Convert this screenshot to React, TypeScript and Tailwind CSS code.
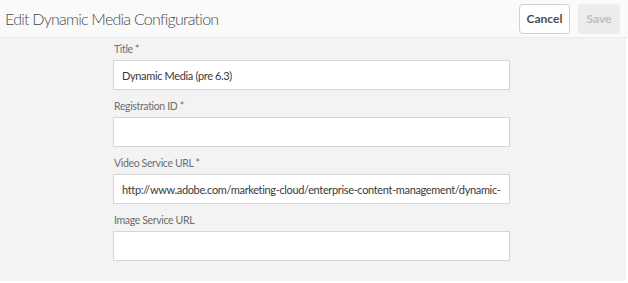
import React from 'react'

const fields = [
  { label: 'Title *', value: 'Dynamic Media (pre 6.3)' },
  { label: 'Registration ID *', value: '' },
  {
    label: 'Video Service URL *',
    value: 'http://www.adobe.com/marketing-cloud/enterprise-content-management/dynamic-media.html',
  },
  { label: 'Image Service URL', value: '' },
]

export default function App() {
  return (
    <div className="w-[628px] h-[283px] bg-white font-['Lato',sans-serif] overflow-hidden">
      {/* header */}
      <div className="h-[38px] bg-[#fafafa] flex items-center justify-between pl-[5px] pr-[8px] border-b border-[#ececec]">
        <h1 className="text-[16px] font-light text-[#4b4b4b] tracking-[-0.75px]">Edit Dynamic Media Configuration</h1>
        <div className="flex items-center gap-[8px]">
          <button className="h-[30px] w-[51px] rounded-[4px] border border-[#d0d0d0] bg-white text-[12px] font-bold text-[#4b4b4b]">
            Cancel
          </button>
          <button className="h-[30px] w-[42px] rounded-[4px] bg-[#ececec] text-[12px] font-bold text-[#bdbdbd]" disabled>
            Save
          </button>
        </div>
      </div>

      {/* form body */}
      <div className="w-[626px] h-[243px] bg-[#f3f3f3] pt-[3px] pl-[113px]">
        <div className="w-[397px] flex flex-col">
          {fields.map((f) => (
            <div key={f.label} className="mb-[8px]">
              <div className="h-[16px] leading-[16px] text-[10.5px] tracking-[-0.35px] text-[#6e6e6e] pl-[1px] mb-[3px]">
                {f.label}
              </div>
              <input
                readOnly
                value={f.value}
                className="block w-full h-[30px] bg-white border border-[#d6d6d6] px-[8px] text-[11px] tracking-[-0.35px] text-[#3a3a3a] outline-none"
              />
            </div>
          ))}
        </div>
      </div>
    </div>
  )
}
